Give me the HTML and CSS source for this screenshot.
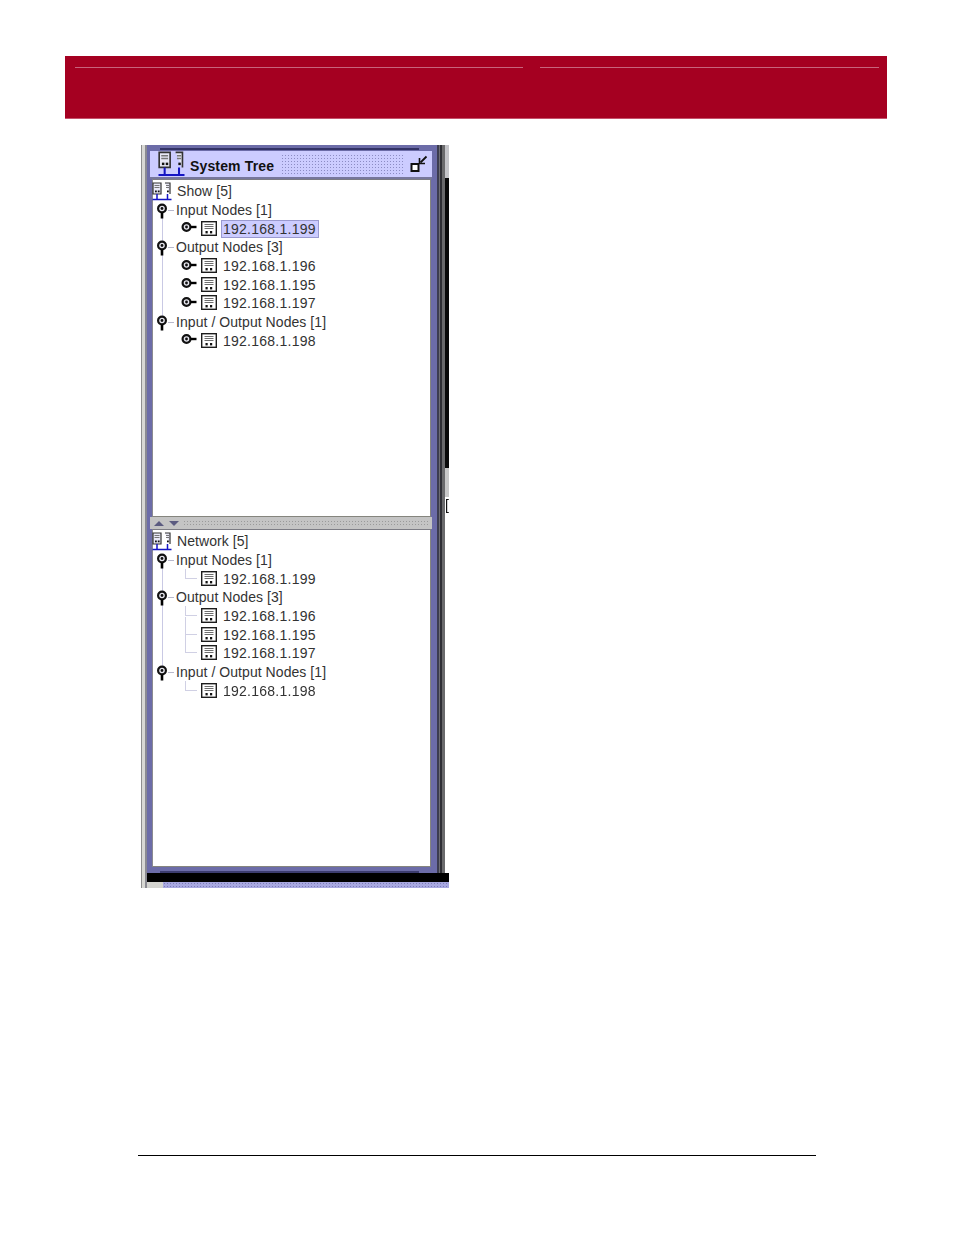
FILE: index.html
```html
<!DOCTYPE html>
<html lang="en">
<head>
<meta charset="utf-8">
<title>System Tree</title>
<link rel="stylesheet" href="styles.css">
</head>
<body>
<svg class="defs" width="0" height="0" aria-hidden="true">
  <defs>
    <symbol id="node" viewBox="0 0 16 15">
      <rect x="0.7" y="0.7" width="14.6" height="13.6" fill="#fff" stroke="#1c1c1c" stroke-width="1.4"/>
      <path d="M3.500 3.500h9M3.500 5.500h9M3.500 7.500h9" stroke="#6e6e6e" fill="none"/>
      <rect x="4.500" y="10" width="2.200" height="2.400" fill="#111"/>
      <rect x="9" y="10" width="2.200" height="2.400" fill="#111"/>
    </symbol>
    <symbol id="pin-down" viewBox="0 0 12 16">
      <circle cx="6" cy="5.500" r="3.900" fill="#e8e8f0" stroke="#111" stroke-width="2.200"/>
      <circle cx="6" cy="5.500" r="1.400" fill="#111"/>
      <path d="M6 9.500v6" stroke="#000" stroke-width="2.600"/>
    </symbol>
    <symbol id="pin-right" viewBox="0 0 16 12">
      <circle cx="5.500" cy="6" r="3.900" fill="#e8e8f0" stroke="#111" stroke-width="2.200"/>
      <circle cx="5.500" cy="6" r="1.400" fill="#111"/>
      <path d="M9.500 6h6" stroke="#000" stroke-width="2.400"/>
    </symbol>
    <symbol id="network" viewBox="0 0 20 19">
      <path d="M1 1h8v11H1zM13 1h5v11" fill="#e8e8f6" stroke="#333" stroke-width="1.200"/>
      <path d="M2.500 3.500h5M2.500 5.500h5M14 3.500h3M14 5.500h3" stroke="#777"/>
      <rect x="3" y="8.500" width="1.800" height="1.800" fill="#111"/>
      <rect x="5.800" y="8.500" width="1.800" height="1.800" fill="#111"/>
      <rect x="15" y="8.500" width="1.800" height="1.800" fill="#111"/>
      <path d="M5 12v5M15.500 12v5M0.500 17.500h19" stroke="#1414c4" stroke-width="1.500" fill="none"/>
    </symbol>
  </defs>
</svg>

<header class="banner">
  <div class="banner-rules"><span class="rule-left"></span><span class="rule-right"></span></div>
</header>

<main class="shot">
  <div class="strip-left"></div>
  <div class="shot-body">
    <div class="shot-main">
      <section class="window">
        <div class="frame-line"></div>
        <div class="titlebar">
          <svg class="title-icon"><use href="#network"/></svg>
          <span class="title-text">System Tree</span>
          <span class="title-dots"></span>
          <svg class="title-restore" viewBox="0 0 18 18">
            <rect x="1.500" y="9" width="7" height="7" fill="#fff" stroke="#111" stroke-width="2"/>
            <path d="M16.500 1.500 10.500 7.500" stroke="#111" stroke-width="1.800"/>
            <path d="M9.500 3v5.500H15" stroke="#111" stroke-width="1.600" fill="none"/>
          </svg>
        </div>

        <div class="pane">
          <div class="row">
            <svg class="ico-network"><use href="#network"/></svg><span class="label">Show [5]</span>
          </div>
          <div class="trunk">
            <div class="row"><svg class="ico-pin"><use href="#pin-down"/></svg><span class="dash"></span><span class="label">Input Nodes [1]</span></div>
            <div class="row leaf"><svg class="ico-handle"><use href="#pin-right"/></svg><svg class="ico-node"><use href="#node"/></svg><span class="ip selected">192.168.1.199</span></div>
            <div class="row"><svg class="ico-pin"><use href="#pin-down"/></svg><span class="dash"></span><span class="label">Output Nodes [3]</span></div>
            <div class="row leaf"><svg class="ico-handle"><use href="#pin-right"/></svg><svg class="ico-node"><use href="#node"/></svg><span class="ip">192.168.1.196</span></div>
            <div class="row leaf"><svg class="ico-handle"><use href="#pin-right"/></svg><svg class="ico-node"><use href="#node"/></svg><span class="ip">192.168.1.195</span></div>
            <div class="row leaf"><svg class="ico-handle"><use href="#pin-right"/></svg><svg class="ico-node"><use href="#node"/></svg><span class="ip">192.168.1.197</span></div>
            <div class="row"><svg class="ico-pin"><use href="#pin-down"/></svg><span class="dash"></span><span class="label">Input / Output Nodes [1]</span></div>
            <div class="row leaf"><svg class="ico-handle"><use href="#pin-right"/></svg><svg class="ico-node"><use href="#node"/></svg><span class="ip">192.168.1.198</span></div>
          </div>
        </div>

        <div class="divider">
          <span class="arrow-up"></span><span class="arrow-down"></span><span class="divider-dots"></span>
        </div>

        <div class="pane">
          <div class="row">
            <svg class="ico-network"><use href="#network"/></svg><span class="label">Network [5]</span>
          </div>
          <div class="trunk">
            <div class="row"><svg class="ico-pin"><use href="#pin-down"/></svg><span class="dash"></span><span class="label">Input Nodes [1]</span></div>
            <div class="row leaf"><span class="elbow"></span><svg class="ico-node"><use href="#node"/></svg><span class="ip">192.168.1.199</span></div>
            <div class="row"><svg class="ico-pin"><use href="#pin-down"/></svg><span class="dash"></span><span class="label">Output Nodes [3]</span></div>
            <div class="row leaf"><span class="elbow"></span><svg class="ico-node"><use href="#node"/></svg><span class="ip">192.168.1.196</span></div>
            <div class="row leaf"><span class="elbow"></span><svg class="ico-node"><use href="#node"/></svg><span class="ip">192.168.1.195</span></div>
            <div class="row leaf"><span class="elbow"></span><svg class="ico-node"><use href="#node"/></svg><span class="ip">192.168.1.197</span></div>
            <div class="row"><svg class="ico-pin"><use href="#pin-down"/></svg><span class="dash"></span><span class="label">Input / Output Nodes [1]</span></div>
            <div class="row leaf"><span class="elbow"></span><svg class="ico-node"><use href="#node"/></svg><span class="ip">192.168.1.198</span></div>
          </div>
        </div>
        <div class="frame-line frame-bottom"></div>
      </section>
      <div class="strip-right">
        <div class="strip-bars"></div>
        <div class="strip-desk">
          <span class="desk-top"></span>
          <span class="desk-black"></span>
          <span class="desk-grey"></span>
          <span class="desk-white">[</span>
        </div>
      </div>
    </div>
    <div class="black-band"></div>
    <div class="dot-band"><span class="corner"></span><span class="dots-purple"></span></div>
  </div>
</main>

<footer class="page-rule"></footer>
</body>
</html>
```
FILE: styles.css
```css
html, body {
  margin: 0;
  padding: 0;
  background: #fff;
}
body {
  width: 954px;
  height: 1235px;
  overflow: hidden;
  font-family: "Liberation Sans", Arial, sans-serif;
  color: #2a2a2a;
}
.defs {
  display: block;
  height: 0;
}

/* red banner */
.banner {
  margin: 56px 67px 0 65px;
  height: 51px;
  background: #a50021;
  border-bottom: 1px solid #c4526c;
  padding-top: 11px;
}
.banner-rules {
  display: flex;
  padding-left: 10px;
  padding-right: 8px;
  gap: 17px;
}
.banner-rules span {
  height: 1px;
  background: #c8647c;
}
.rule-left { width: 448px; }
.rule-right { flex: 1; }

/* screenshot */
.shot {
  margin: 26px 0 0 141px;
  width: 308px;
  height: 743px;
  display: flex;
  filter: blur(0.4px);
}
.shot-body {
  flex: 1;
  display: flex;
  flex-direction: column;
}
.shot-main {
  display: flex;
  height: 728px;
}
.strip-left {
  width: 6px;
  background: linear-gradient(90deg, #8e8e8e 0 1px, #d8d8d4 1px 4px, #8a8a92 4px);
}
.window {
  width: 290px;
  box-sizing: border-box;
  background: #6c6ca8;
  padding: 0 6px 0 3px;
  display: flex;
  flex-direction: column;
}
.frame-line {
  height: 2px;
  margin: 3px 12px 1px 10px;
  background: #333366;
  flex: none;
}
.frame-bottom {
  margin: 4px 12px 0 10px;
  background: #3d3d70;
  box-shadow: 0 1px 0 #9a9ac8;
}
.titlebar {
  flex: none;
  height: 28px;
  background: #ccccff;
  display: flex;
  align-items: center;
  padding-left: 7px;
  box-sizing: border-box;
  border-bottom: 2px solid #77779c;
  margin-right: -1px;
}
.title-icon {
  width: 29px;
  height: 26px;
  flex: none;
}
.title-text {
  margin-left: 4px;
  margin-top: 3px;
  font-weight: 700;
  font-size: 14px;
  letter-spacing: 0.15px;
  color: #111;
  width: 91px;
  flex: none;
  white-space: nowrap;
}
.title-dots {
  width: 122px;
  height: 20px;
  flex: none;
  background-color: #ccccff;
  background-image: radial-gradient(circle, #8c8cc4 0.8px, transparent 1px);
  background-size: 3px 3px;
}
.title-restore {
  width: 18px;
  height: 18px;
  margin-left: 7px;
  flex: none;
}

/* tree panes */
.pane {
  flex: none;
  height: 338px;
  margin-left: 2px;
  width: 279px;
  box-sizing: border-box;
  background: #fff;
  border-top: 1px solid #7c7c84;
  border-left: 1px solid #8a8a90;
  border-right: 1px solid #85857e;
  border-bottom: 1px solid #85857e;
  padding-top: 2px;
  font-size: 14px;
  line-height: 18.7px;
}
.row {
  display: flex;
  align-items: center;
  height: 18.7px;
}
.trunk {
  background: linear-gradient(#c9c9e4, #c9c9e4) 9px 4px / 1px 118px no-repeat;
}
.ico-network {
  width: 20px;
  height: 19px;
  flex: none;
  margin-left: -1px;
}
.ico-network + .label {
  margin-left: 5px;
}
.ico-pin {
  width: 12px;
  height: 16px;
  flex: none;
  margin-left: 3px;
  margin-top: 1px;
}
.dash {
  width: 6px;
  height: 1px;
  background: #b8b8cc;
  flex: none;
}
.dash + .label {
  margin-left: 2px;
}
.label,
.ip {
  white-space: nowrap;
  color: #333;
}
.label {
  letter-spacing: 0.06px;
}
.leaf {
  padding-left: 28px;
}
.ico-handle {
  width: 16px;
  height: 12px;
  flex: none;
  margin-top: -3px;
}
.ico-node {
  width: 16px;
  height: 15px;
  flex: none;
  margin-left: 4px;
  margin-top: -1px;
}
.elbow {
  width: 12px;
  height: 10px;
  flex: none;
  margin-left: 4px;
  margin-top: -10px;
  box-sizing: border-box;
  border-left: 1px solid #d0d0e4;
  border-bottom: 1px solid #d0d0e4;
}
.leaf + .leaf .elbow {
  height: 18px;
  margin-top: -18px;
}
.ip {
  margin-left: 4px;
  padding: 0 2px 0 1px;
  border: 1px solid transparent;
  line-height: 16px;
  letter-spacing: 0.25px;
}
.selected {
  background: #ccccff;
  border-color: #9a9ad0;
}

/* splitter */
.divider {
  flex: none;
  height: 12px;
  margin-right: -1px;
  background: #c4c4c4;
  display: flex;
  align-items: center;
  padding-left: 4px;
  box-sizing: border-box;
}
.arrow-up {
  width: 0;
  height: 0;
  flex: none;
  border-left: 5px solid transparent;
  border-right: 5px solid transparent;
  border-bottom: 5px solid #5b5b80;
}
.arrow-down {
  width: 0;
  height: 0;
  flex: none;
  margin-left: 5px;
  border-left: 5px solid transparent;
  border-right: 5px solid transparent;
  border-top: 5px solid #5b5b80;
}
.divider-dots {
  flex: 1;
  height: 6px;
  margin-left: 4px;
  margin-right: 2px;
  background-image: radial-gradient(circle, #9a9a9a 0.8px, transparent 1px);
  background-size: 3px 3px;
}

/* right strip */
.strip-right {
  width: 12px;
  display: flex;
}
.strip-bars {
  width: 8px;
  background: linear-gradient(90deg, #3c3c50 0 2px, #6e6e72 2px 3px, #2e2e34 3px 5px, #6a6a6c 5px);
}
.strip-desk {
  width: 4px;
  display: flex;
  flex-direction: column;
  background: #fff;
}
.desk-top {
  height: 33px;
  background: #c4c4c8;
}
.desk-black {
  height: 290px;
  background: #0a0a0a;
}
.desk-grey {
  height: 29px;
  background: #c8c8c8;
}
.desk-white {
  font-size: 14px;
  line-height: 16px;
  color: #111;
}

/* bottom of screenshot */
.black-band {
  height: 9px;
  background: #000;
  flex: none;
}
.dot-band {
  height: 6px;
  display: flex;
  flex: none;
}
.corner {
  width: 16px;
  background: #d4d4d0;
}
.dots-purple {
  flex: 1;
  background-color: #a8a8e0;
  background-image: radial-gradient(circle, #7c7cb8 0.8px, transparent 1px);
  background-size: 3px 3px;
}

/* page footer rule */
.page-rule {
  margin: 267px 0 0 138px;
  width: 678px;
  height: 1px;
  background: #000;
}
```
